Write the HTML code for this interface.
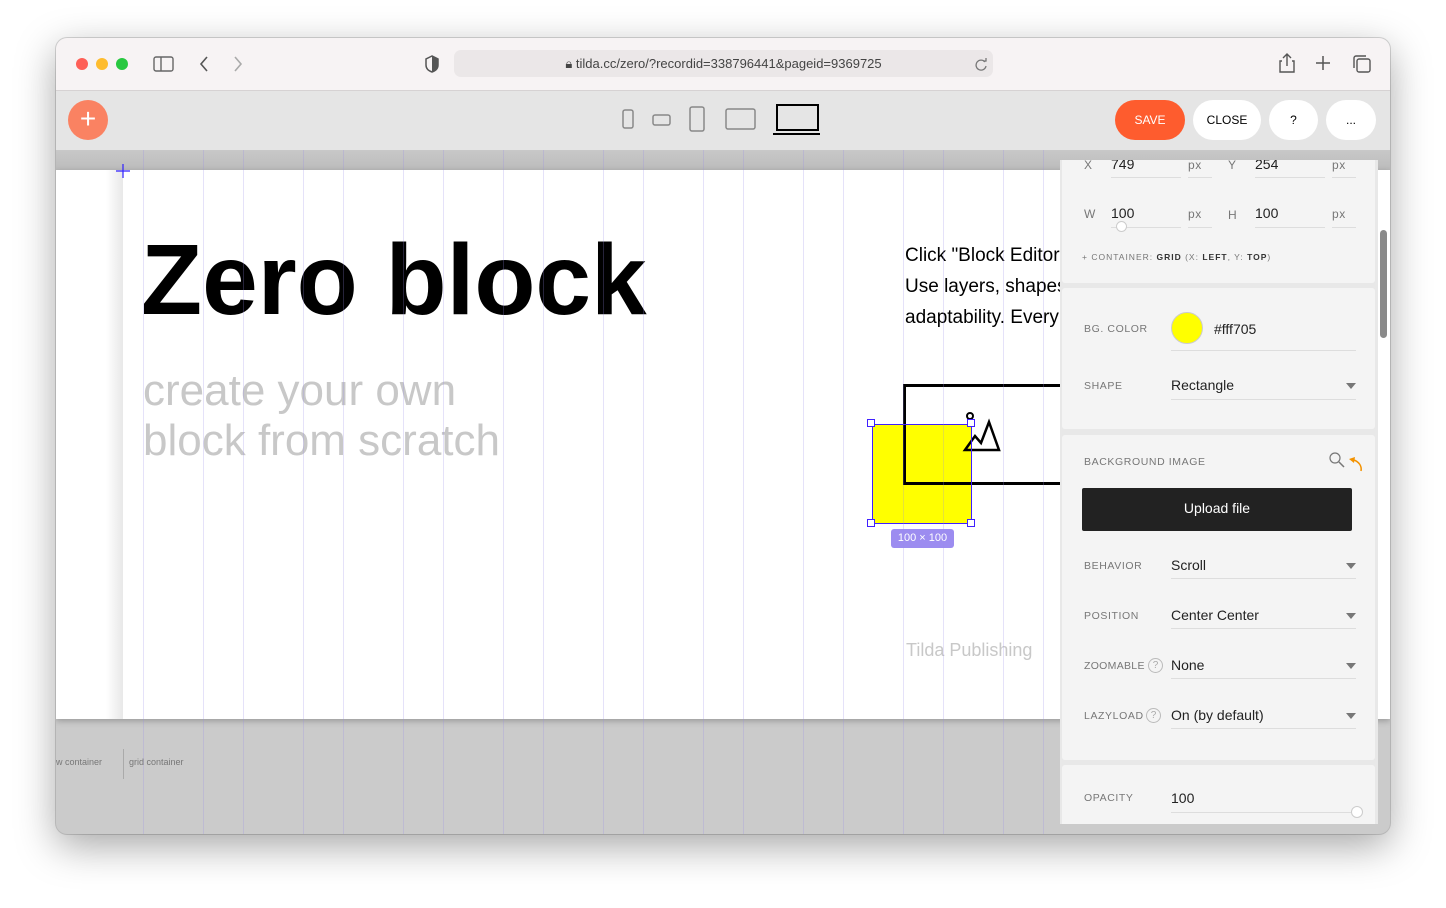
<!DOCTYPE html>
<html><head><meta charset="utf-8"><style>
*{margin:0;padding:0;box-sizing:border-box}
body{width:1446px;height:908px;background:#fff;position:relative;overflow:hidden;font-family:"Liberation Sans",sans-serif}
.win{position:absolute;left:56px;top:38px;width:1334px;height:796px;border-radius:11px;overflow:hidden;box-shadow:0 12px 40px rgba(0,0,0,.35),0 0 0 1px rgba(0,0,0,.15);background:#cbcbcb}
.title{position:absolute;left:0;top:0;width:1334px;height:53px;background:#f7f3f4;border-bottom:1px solid #d6d2d3}
.dot{position:absolute;top:20px;width:12px;height:12px;border-radius:50%}
.url{position:absolute;left:398px;top:12px;width:539px;height:27px;background:#ebe7e8;border-radius:7px;font-size:13px;color:#444;text-align:center;line-height:27px}
.tb{position:absolute;left:0;top:53px;width:1334px;height:59px;background:#e5e5e5}
.abs{position:absolute}
.btn{position:absolute;top:9px;height:40px;border-radius:20px;background:#fff;font-size:12px;text-align:center;line-height:40px;color:#000}
.canvas{position:absolute;left:0;top:132px;width:1334px;height:549px;background:#fff;box-shadow:0 2px 6px rgba(0,0,0,.25)}
.band{position:absolute;left:0;top:112px;width:1334px;height:20px;background:linear-gradient(#c8c8c8,#bcbcbc)}
.gl{position:absolute;top:112px;width:1px;height:684px;background:rgba(150,140,230,.25)}
.panel{position:absolute;left:1004px;top:122px;width:318px;height:664px;background:#e8e8e8;overflow:hidden}
.sec{position:absolute;left:2px;width:313px;background:#f4f4f4;border-radius:3px}
.lab{position:absolute;font-size:10.5px;letter-spacing:.6px;color:#777}
.val{position:absolute;font-size:14px;color:#222}
.ln{position:absolute;height:1px;background:#ddd}
.tri{position:absolute;width:0;height:0;border-left:5px solid transparent;border-right:5px solid transparent;border-top:6px solid #777}
</style></head><body>
<div class="win">
 <div class="title">
  <div class="dot" style="left:20px;background:#fe5f57"></div>
  <div class="dot" style="left:40px;background:#febc2e"></div>
  <div class="dot" style="left:60px;background:#28c840"></div>
  <svg class="abs" style="left:97px;top:17px" width="22" height="18"><rect x="1" y="2" width="19" height="14" rx="2" fill="none" stroke="#666" stroke-width="1.4"/><line x1="8" y1="2" x2="8" y2="16" stroke="#666" stroke-width="1.4"/></svg>
  <svg class="abs" style="left:142px;top:17px" width="12" height="18"><path d="M9 2L3 9l6 7" fill="none" stroke="#555" stroke-width="1.6"/></svg>
  <svg class="abs" style="left:176px;top:17px" width="12" height="18"><path d="M3 2l6 7-6 7" fill="none" stroke="#aaa" stroke-width="1.6"/></svg>
  <svg class="abs" style="left:368px;top:16px" width="16" height="20"><path d="M8 2L2 5v6c0 4 3 6 6 7 3-1 6-3 6-7V5z" fill="none" stroke="#555" stroke-width="1.5"/><path d="M8 2v16c3-1 6-3 6-7V5z" fill="#555"/></svg>
  <div class="url">🔒︎ tilda.cc/zero/?recordid=338796441&amp;pageid=9369725</div>
  <svg class="abs" style="left:918px;top:19px" width="14" height="14"><path d="M11 5a5 5 0 1 0 1 4" fill="none" stroke="#777" stroke-width="1.3"/><path d="M9 4h3V1" fill="none" stroke="#777" stroke-width="1.3"/></svg>
  <svg class="abs" style="left:1222px;top:14px" width="18" height="22"><path d="M9 2v12M5 6l4-4 4 4M4 9H2v11h14V9h-2" fill="none" stroke="#555" stroke-width="1.4"/></svg>
  <svg class="abs" style="left:1259px;top:17px" width="16" height="16"><path d="M8 1v14M1 8h14" stroke="#555" stroke-width="1.5"/></svg>
  <svg class="abs" style="left:1296px;top:16px" width="20" height="20"><rect x="5" y="5" width="13" height="13" rx="2" fill="none" stroke="#555" stroke-width="1.4"/><path d="M2 14V4a2 2 0 0 1 2-2h10" fill="none" stroke="#555" stroke-width="1.4"/></svg>
 </div>
 <div class="tb">
  <div class="abs" style="left:12px;top:9px;width:40px;height:40px;border-radius:50%;background:#fa8262;color:#fff;font-size:28px;line-height:38px;text-align:center">+</div>
  <svg class="abs" style="left:564px;top:12px" width="200" height="34">
   <rect x="3" y="7" width="10" height="18" rx="2" fill="none" stroke="#888" stroke-width="1.5"/>
   <rect x="33" y="12" width="17" height="10" rx="2" fill="none" stroke="#888" stroke-width="1.5"/>
   <rect x="70" y="4" width="14" height="24" rx="2" fill="none" stroke="#888" stroke-width="1.5"/>
   <rect x="106" y="6" width="29" height="20" rx="2" fill="none" stroke="#888" stroke-width="1.5"/>
   <rect x="157" y="2" width="41" height="25" fill="none" stroke="#000" stroke-width="2"/>
   <line x1="153" y1="31" x2="201" y2="31" stroke="#000" stroke-width="2"/>
  </svg>
  <div class="btn" style="left:1059px;width:70px;background:#fe5c2e;color:#fff">SAVE</div>
  <div class="btn" style="left:1137px;width:68px">CLOSE</div>
  <div class="btn" style="left:1213px;width:49px">?</div>
  <div class="btn" style="left:1270px;width:50px">...</div>
 </div>
 <div class="band"></div>
 <div class="canvas">
  <div class="abs" style="left:0;top:0;width:67px;height:549px;background:linear-gradient(90deg,#fff 50px,#e8e8e8)"></div>
  <div class="abs" style="left:85px;top:53px;font-size:100px;font-weight:bold;color:#000">Zero block</div>
  <div class="abs" style="left:87px;top:196px;font-size:44px;color:#c8c8c8;line-height:50px">create your own<br>block from scratch</div>
  <div class="abs" style="left:849px;top:70px;font-size:19px;line-height:31px;color:#000;white-space:nowrap">Click "Block Editor" to edit.<br>Use layers, shapes and customize<br>adaptability. Every</div>
  <div class="abs" style="left:850px;top:470px;font-size:18px;color:#c8c8c8">Tilda Publishing</div>
  <div class="abs" style="left:847px;top:214px;width:170px;height:101px;background:#fff"></div>
  <div class="abs" style="left:816px;top:254px;width:100px;height:100px;background:#ffff00"></div>
  <div class="abs" style="left:847px;top:214px;width:170px;height:101px;border:3px solid #000"></div>
  <svg class="abs" style="left:905px;top:240px" width="40" height="44"><circle cx="9" cy="6" r="3" fill="none" stroke="#000" stroke-width="2"/><path d="M4 40l10-14 6 7 8-21 10 28z" fill="none" stroke="#000" stroke-width="2.5"/></svg>
  <div class="abs" style="left:816px;top:254px;width:100px;height:100px;border:1px solid #4020ff"></div>
  <div class="abs" style="left:811px;top:249px;width:8px;height:8px;background:#fff;border:1px solid #4020ff"></div>
  <div class="abs" style="left:911px;top:249px;width:8px;height:8px;background:#fff;border:1px solid #4020ff"></div>
  <div class="abs" style="left:811px;top:349px;width:8px;height:8px;background:#fff;border:1px solid #4020ff"></div>
  <div class="abs" style="left:911px;top:349px;width:8px;height:8px;background:#fff;border:1px solid #4020ff"></div>
  <div class="abs" style="left:835px;top:359px;width:63px;height:19px;background:#9c8cf0;border-radius:3px;color:#fff;font-size:11px;text-align:center;line-height:19px">100 × 100</div>
 </div>
 <div class="gl" style="left:87px"></div><div class="gl" style="left:147px"></div>
 <div class="gl" style="left:187px"></div><div class="gl" style="left:247px"></div>
 <div class="gl" style="left:287px"></div><div class="gl" style="left:347px"></div>
 <div class="gl" style="left:387px"></div><div class="gl" style="left:447px"></div>
 <div class="gl" style="left:487px"></div><div class="gl" style="left:547px"></div>
 <div class="gl" style="left:587px"></div><div class="gl" style="left:647px"></div>
 <div class="gl" style="left:687px"></div><div class="gl" style="left:747px"></div>
 <div class="gl" style="left:787px"></div><div class="gl" style="left:847px"></div>
 <div class="gl" style="left:887px"></div><div class="gl" style="left:947px"></div>
 <div class="gl" style="left:987px"></div>
 <svg class="abs" style="left:60px;top:126px" width="14" height="14"><path d="M7 0v14M0 7h14" stroke="#3020ff" stroke-width="1.2"/></svg>
 <div class="abs" style="left:0;top:719px;font-size:9px;color:#777">w container</div>
 <div class="abs" style="left:67px;top:711px;width:1px;height:30px;background:#aaa"></div>
 <div class="abs" style="left:73px;top:719px;font-size:9px;color:#777">grid container</div>
 <div class="panel">
  <div class="sec" style="top:-10px;height:133px">
   <div class="lab" style="left:22px;top:8px;font-size:12px">X</div><div class="val" style="left:49px;top:6px">749</div>
   <div class="ln" style="left:49px;top:27px;width:70px"></div>
   <div class="lab" style="left:126px;top:8px;font-size:12px">px</div><div class="ln" style="left:126px;top:27px;width:24px"></div>
   <div class="lab" style="left:166px;top:8px;font-size:12px">Y</div><div class="val" style="left:193px;top:6px">254</div>
   <div class="ln" style="left:193px;top:27px;width:70px"></div>
   <div class="lab" style="left:270px;top:8px;font-size:12px">px</div><div class="ln" style="left:270px;top:27px;width:24px"></div>
   <div class="lab" style="left:22px;top:57px;font-size:12px">W</div><div class="val" style="left:49px;top:55px">100</div>
   <div class="ln" style="left:49px;top:77px;width:70px"></div>
   <div class="abs" style="left:54px;top:71px;width:11px;height:11px;border-radius:50%;background:#fff;border:1px solid #ccc"></div>
   <div class="lab" style="left:126px;top:57px;font-size:12px">px</div><div class="ln" style="left:126px;top:77px;width:24px"></div>
   <div class="lab" style="left:166px;top:58px;font-size:12px">H</div><div class="val" style="left:193px;top:55px">100</div>
   <div class="ln" style="left:193px;top:77px;width:70px"></div>
   <div class="lab" style="left:270px;top:57px;font-size:12px">px</div><div class="ln" style="left:270px;top:77px;width:24px"></div>
   <div class="lab" style="left:20px;top:102px;font-size:8.5px;letter-spacing:1px">+ CONTAINER: <b style="color:#333">GRID</b> (X: <b style="color:#333">LEFT</b>, Y: <b style="color:#333">TOP</b>)</div>
  </div>
  <div class="sec" style="top:128px;height:141px">
   <div class="lab" style="left:22px;top:35px">BG. COLOR</div>
   <div class="abs" style="left:109px;top:24px;width:32px;height:32px;border-radius:50%;background:#ffff00;border:1px solid #ccc"></div>
   <div class="val" style="left:152px;top:33px">#fff705</div>
   <div class="ln" style="left:109px;top:62px;width:185px"></div>
   <div class="lab" style="left:22px;top:92px">SHAPE</div>
   <div class="val" style="left:109px;top:89px">Rectangle</div>
   <div class="tri" style="left:284px;top:95px"></div>
   <div class="ln" style="left:109px;top:111px;width:185px"></div>
  </div>
  <div class="sec" style="top:275px;height:325px">
   <div class="lab" style="left:22px;top:21px">BACKGROUND IMAGE</div>
   <svg class="abs" style="left:266px;top:16px" width="50" height="40"><circle cx="7" cy="7" r="5" fill="none" stroke="#777" stroke-width="1.2"/><path d="M11 11l5 5" stroke="#777" stroke-width="1.5"/><path d="M26 9c5 2 8 6 7 11" fill="none" stroke="#f39200" stroke-width="1.5"/><path d="M21 8l6-2-1 6z" fill="#f39200"/></svg>
   <div class="abs" style="left:20px;top:53px;width:270px;height:43px;background:#222;border-radius:2px;color:#fff;font-size:14px;text-align:center;line-height:41px">Upload file</div>
   <div class="lab" style="left:22px;top:125px">BEHAVIOR</div><div class="val" style="left:109px;top:122px">Scroll</div>
   <div class="tri" style="left:284px;top:128px"></div><div class="ln" style="left:109px;top:143px;width:185px"></div>
   <div class="lab" style="left:22px;top:175px">POSITION</div><div class="val" style="left:109px;top:172px">Center Center</div>
   <div class="tri" style="left:284px;top:178px"></div><div class="ln" style="left:109px;top:193px;width:185px"></div>
   <div class="lab" style="left:22px;top:225px;letter-spacing:.3px">ZOOMABLE</div>
   <div class="abs" style="left:86px;top:223px;width:15px;height:15px;border-radius:50%;border:1px solid #bbb;font-size:10px;color:#aaa;text-align:center;line-height:13px">?</div>
   <div class="val" style="left:109px;top:222px">None</div>
   <div class="tri" style="left:284px;top:228px"></div><div class="ln" style="left:109px;top:243px;width:185px"></div>
   <div class="lab" style="left:22px;top:275px">LAZYLOAD</div>
   <div class="abs" style="left:84px;top:273px;width:15px;height:15px;border-radius:50%;border:1px solid #bbb;font-size:10px;color:#aaa;text-align:center;line-height:13px">?</div>
   <div class="val" style="left:109px;top:272px">On (by default)</div>
   <div class="tri" style="left:284px;top:278px"></div><div class="ln" style="left:109px;top:293px;width:185px"></div>
  </div>
  <div class="sec" style="top:605px;height:80px">
   <div class="lab" style="left:22px;top:27px">OPACITY</div><div class="val" style="left:109px;top:25px">100</div>
   <div class="ln" style="left:109px;top:47px;width:185px"></div>
   <div class="abs" style="left:289px;top:41px;width:12px;height:12px;border-radius:50%;background:#fff;border:1px solid #ccc"></div>
  </div>
 </div>
 <div class="abs" style="left:1324px;top:192px;width:7px;height:108px;border-radius:4px;background:#8a8a8a"></div>
</div>
</body></html>
